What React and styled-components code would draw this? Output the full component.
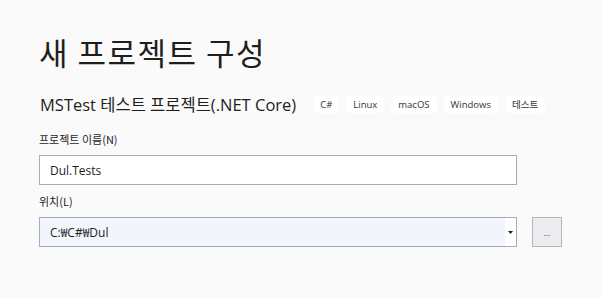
import styled, { createGlobalStyle } from "styled-components";

const Global = createGlobalStyle`
  html, body {
    margin: 0;
    background: #fafafa;
  }
  body {
    font-family: "Noto Sans CJK KR", "Open Sans", sans-serif;
    color: #1e1e1e;
  }
`;

const Page = styled.div`
  width: 602px;
  height: 298px;
  box-sizing: border-box;
  padding: 30px 0 0 39px;
  background: #fafafa;
`;

const Title = styled.h1`
  margin: 0;
  font-size: 31px;
  font-weight: 400;
  letter-spacing: 1.5px;
  line-height: 44px;
  color: #1e1e1e;
`;

const TemplateRow = styled.div`
  display: flex;
  align-items: center;
  margin-top: 17px;
  height: 26px;
`;

const TemplateName = styled.h2`
  margin: 0 17px 0 1px;
  font-family: "Open Sans", "Noto Sans CJK KR", sans-serif;
  font-size: 16.5px;
  font-weight: 400;
  color: #1e1e1e;
  white-space: nowrap;
`;

const Tags = styled.ul`
  display: flex;
  gap: 7px;
  margin: 0;
  padding: 0;
  list-style: none;
`;

const Tag = styled.li`
  background: #ffffff;
  border-radius: 4px;
  padding: 0 7px;
  height: 17px;
  line-height: 17px;
  font-family: "Open Sans", "Noto Sans CJK KR", sans-serif;
  font-size: 9.5px;
  color: #333;
`;

const Field = styled.div`
  display: flex;
  flex-direction: column;
  margin-top: ${(p) => p.$top}px;
`;

const Label = styled.label`
  font-size: 11px;
  color: #1e1e1e;
  height: 16px;
  line-height: 16px;
  margin-bottom: 8px;
`;

const InputRow = styled.div`
  display: flex;
  align-items: center;
  gap: 15px;
`;

const TextBox = styled.div`
  width: 478px;
  height: 30px;
  box-sizing: border-box;
  border: 1px solid #a6adb9;
  background: #ffffff;
  display: flex;
  align-items: center;
  padding-left: 10px;
  font-family: "Open Sans", "Noto Sans CJK KR", sans-serif;
  font-size: 12px;
  color: #1e1e1e;
`;

const Combo = styled(TextBox)`
  background: #f2f5fc;
  padding-left: 0;
`;

const ComboText = styled.span`
  flex: 1;
  padding-left: 10px;
`;

const DropArea = styled.span`
  width: 11px;
  height: 28px;
  background: #ffffff;
  display: flex;
  align-items: center;
  justify-content: center;
`;

const BrowseButton = styled.button`
  width: 30px;
  height: 30px;
  box-sizing: border-box;
  border: 1px solid #b7b7bb;
  background: #ecebef;
  padding: 0;
  font-family: "Open Sans", sans-serif;
  font-size: 9px;
  color: #555;
  line-height: 1;
`;

export default function App() {
  return (
    <Page>
      <Global />
      <Title>새 프로젝트 구성</Title>
      <TemplateRow>
        <TemplateName>MSTest 테스트 프로젝트(.NET Core)</TemplateName>
        <Tags>
          {["C#", "Linux", "macOS", "Windows", "테스트"].map((t) => (
            <Tag key={t}>{t}</Tag>
          ))}
        </Tags>
      </TemplateRow>
      <Field $top={14}>
        <Label>프로젝트 이름(N)</Label>
        <TextBox>Dul.Tests</TextBox>
      </Field>
      <Field $top={8}>
        <Label>위치(L)</Label>
        <InputRow>
          <Combo>
            <ComboText>C:₩C#₩Dul</ComboText>
            <DropArea>
              <svg width="5" height="3" viewBox="0 0 5 3">
                <path d="M0 0h5L2.5 3z" fill="#1e1e1e" />
              </svg>
            </DropArea>
          </Combo>
          <BrowseButton>...</BrowseButton>
        </InputRow>
      </Field>
    </Page>
  );
}
